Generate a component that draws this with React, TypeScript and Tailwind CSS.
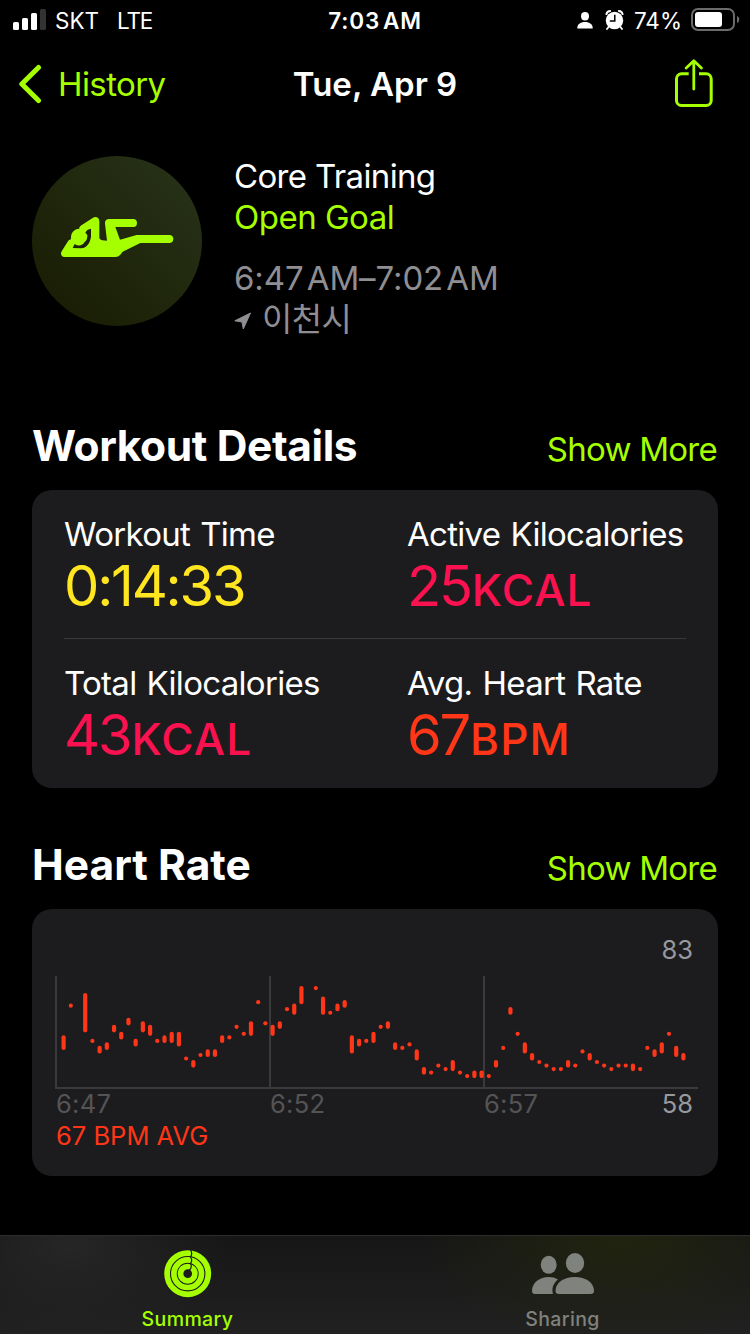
import React from "react";

// [slot, lowest bpm, highest bpm]
const heartRate: number[][] = [
  [0, 66, 69], [1, 78, 78], [3, 71, 81], [4, 68, 68], [5, 65, 66], [6, 66, 67], [7, 71, 72],
  [8, 69, 70], [9, 73, 74], [10, 67, 68], [11, 71, 73], [12, 70, 72], [13, 68, 68], [14, 68, 69],
  [15, 68, 70], [16, 67, 70], [17, 63, 63], [18, 61, 62], [19, 64, 64], [20, 64, 65], [21, 64, 65],
  [22, 68, 69], [23, 69, 69], [24, 72, 72], [25, 70, 70], [26, 70, 73], [27, 79, 79], [28, 73, 73],
  [29, 70, 72], [30, 72, 73], [31, 77, 77], [32, 76, 78], [33, 79, 83], [35, 83, 83], [36, 76, 80],
  [37, 76, 76], [38, 77, 78], [39, 78, 79], [40, 65, 69], [41, 67, 68], [42, 68, 68], [43, 68, 70],
  [44, 72, 72], [45, 72, 73], [46, 66, 67], [47, 66, 66], [48, 67, 67], [49, 63, 65], [50, 59, 60],
  [51, 59, 59], [52, 61, 61], [53, 60, 60], [54, 60, 62], [55, 59, 59], [56, 58, 58], [57, 58, 59],
  [58, 58, 59], [59, 58, 58], [60, 61, 62], [61, 66, 66], [62, 76, 77], [63, 70, 70], [64, 65, 67],
  [65, 63, 64], [66, 62, 62], [67, 61, 61], [68, 60, 60], [69, 60, 60], [70, 61, 62], [71, 61, 61],
  [72, 65, 65], [73, 63, 64], [74, 62, 62], [75, 61, 61], [76, 60, 60], [77, 61, 61], [78, 61, 61],
  [79, 60, 61], [80, 60, 60], [81, 66, 66], [82, 64, 65], [83, 65, 67], [84, 70, 70], [85, 64, 66],
  [86, 63, 64],
];

const StatusBar = () => (
  <div className="grid h-[42px] grid-cols-3 items-center text-[22.5px] leading-[42px]">
    <div className="flex items-center pl-[13px]">
      <svg className="mb-0.5" width="34" height="22" viewBox="0 0 34 22" fill="#fff">
        <rect x="0" y="13" width="6" height="8" rx="1.5" />
        <rect x="9" y="9" width="6" height="12" rx="1.5" />
        <rect x="18" y="4" width="6" height="17" rx="1.5" />
        <rect x="27" y="0" width="6" height="21" rx="1.5" fill="#333" />
      </svg>
      <span className="ml-2">SKT</span>
      <span className="ml-[18px] tracking-[-1.2px]">LTE</span>
    </div>
    <div className="text-center font-semibold tracking-[0.9px] [word-spacing:-4px]">7:03 AM</div>
    <div className="flex items-center justify-end pr-[10px]">
      <svg className="mb-px" width="16" height="17" viewBox="0 0 16 17" fill="#fff">
        <ellipse cx="8" cy="4.2" rx="4" ry="4.2" />
        <path d="M0.3 16.5C0 12.3 3.5 10 8 10s8 2.3 7.7 6.5z" />
      </svg>
      <svg className="mb-0.5 ml-3" width="19" height="20" viewBox="0 0 19 20" fill="none">
        <circle cx="9.5" cy="10.5" r="8.7" fill="#fff" />
        <path d="M1.3 4.2C1.8 2.2 3.3 1 5.2 1M17.7 4.2C17.2 2.2 15.7 1 13.8 1" stroke="#fff" strokeWidth="1.8" strokeLinecap="round" />
        <path d="M3.5 17 2 19M15.5 17l1.5 2" stroke="#fff" strokeWidth="1.8" strokeLinecap="round" />
        <path d="M9.8 4.8v6.2H4.8" stroke="#000" strokeWidth="1.5" />
      </svg>
      <span className="ml-2.5">74%</span>
      <svg className="mb-0.5 ml-[9px]" width="49" height="24" viewBox="0 0 49 24">
        <rect x="1" y="1" width="42" height="21" rx="6" fill="none" stroke="#6b6b6b" strokeWidth="2" />
        <rect x="4" y="4" width="27" height="15" rx="3" fill="#fff" />
        <path d="M46 8c3 .8 3 6.2 0 7z" fill="#6b6b6b" />
      </svg>
    </div>
  </div>
);

const NavBar = () => (
  <div className="grid h-[84px] grid-cols-3 items-center text-[33px] leading-[84px]">
    <div className="flex items-center pl-[18px] text-[#a6ff00]">
      <svg width="24" height="40" viewBox="0 0 24 40" fill="none" stroke="currentColor" strokeWidth="5" strokeLinecap="round" strokeLinejoin="round">
        <path d="M20.5 3.5 3.8 20l16.7 16.500" />
      </svg>
      <span className="ml-4 tracking-[-0.6px]">History</span>
    </div>
    <div className="text-center font-semibold whitespace-nowrap">Tue, Apr 9</div>
    <div className="flex justify-end pr-9">
      <svg width="40" height="50" viewBox="0 0 40 50" fill="none" stroke="#a6ff00" strokeWidth="3" strokeLinejoin="round">
        <path d="M14.7 14.8H7.5a5 5 0 0 0-5 5V41.5a5 5 0 0 0 5 5h24.7a5 5 0 0 0 5-5V19.8a5 5 0 0 0-5-5H25" />
        <path d="M19.8 30V1.8M12.2 9l7.6-7.2L27.4 9" strokeLinecap="round" strokeWidth="2.8" />
      </svg>
    </div>
  </div>
);

const WorkoutIcon = () => (
  <div className="flex h-[170px] w-[170px] items-center justify-center rounded-full bg-gradient-to-tr from-[#171b02] to-[#29341a]">
    <svg width="170" height="170" viewBox="36 33 510 510" fill="#a6ff00">
      {/* torso and legs */}
      <path d="M133 336Q123 335 123 325Q123 321 126 317L143 290Q146 284 153 283Q151 262 166 254Q172 251 178 251Q177 246 182 242L218 219Q224 215 231 217Q238 220 238 228V280Q240 285 247 286L261 287L255 236Q254 222 268 222H340Q351 223 351 234Q351 246 340 246H286L300 284L350 270H448Q460 271 460 282Q459 294 448 294H361L308 320L301 329Q295 336 286 336Z" />
      {/* arm around the head */}
      <path d="M203 254L213 251V275Q211 292 200 303Q192 311 182 310L158 309L164 297Q172 303 182 301Q191 298 194 291Q203 285 202 271Q201 266 196 264Q199 257 203 254Z" fill="#1c2209" />
    </svg>
  </div>
);

const SectionTitle = ({ title, tracking }: { title: string; tracking: string }) => (
  <div className="flex h-[70px] items-center justify-between">
    <h2 className={`text-[42.5px] leading-[70px] font-bold ${tracking}`}>{title}</h2>
    <span className="pt-[7px] pr-px text-[33px] tracking-[-0.75px] text-[#a6ff00]">Show More</span>
  </div>
);

const Metric = ({ label, value, unit, color }: { label: string; value: string; unit?: string; color: string }) => (
  <div className="whitespace-nowrap">
    <div className="text-[33px] leading-[44px] tracking-[-0.7px] [word-spacing:1.5px]">{label}</div>
    <div className={`text-[56px] leading-[60px] tracking-[-2.2px] ${color}`}>
      {value}
      {unit && <span className="ml-px text-[44px] font-medium tracking-[1.2px]">{unit}</span>}
    </div>
  </div>
);

const HeartRateChart = () => (
  <svg className="block overflow-visible" width="644" height="113" viewBox="0 0 644 113">
    <path d="M0 0v112M214 0v112M428 0v112M-1 112h643" stroke="#3a3a3c" strokeWidth="2" fill="none" />
    {heartRate.map(([slot, low, high]) => (
      <rect
        key={slot}
        x={5.5 + slot * 7.207}
        y={98 - (high - 58) * 3.52}
        width="4.2"
        height={4.2 + (high - low) * 3.52}
        rx="2.1"
        fill="#ff3617"
      />
    ))}
  </svg>
);

const TabBar = () => (
  <nav className="grid h-[99px] grid-cols-2 border-t border-[#2c2c2c] bg-[radial-gradient(ellipse_160px_90px_at_70px_10px,#262626,transparent),radial-gradient(ellipse_200px_110px_at_620px_0px,#21240f,transparent),linear-gradient(#161616,#212121)] text-[19.5px] font-medium tracking-[0.4px]">
    <div className="flex flex-col items-center pt-[14px] text-[#a6ff00]">
      <svg width="48" height="48" viewBox="0 0 48 48" fill="none" stroke="currentColor" strokeWidth="5.7">
        <circle cx="23.7" cy="23.7" r="20.6" />
        <circle cx="23.7" cy="23.7" r="13.8" />
        <circle cx="23.7" cy="23.7" r="7.2" />
        <path d="M26.5 0q2.4 3.5 0 7 2.4 3.3 0 6.6 2.2 3.4-1.5 6.9" stroke="#181a14" strokeWidth="1.2" />
      </svg>
      <span className="mt-[6px] leading-[30px]">Summary</span>
    </div>
    <div className="flex flex-col items-center pt-[14px] text-[#80827d]">
      <svg width="64" height="48" viewBox="0 0 64 48" fill="currentColor">
        <ellipse cx="17.7" cy="14.8" rx="8" ry="9" />
        <ellipse cx="44" cy="13" rx="9.2" ry="10" />
        <path d="M4 44q-3 0-3-3C1 32.5 9 27 17.5 27c3.5 0 7 .8 9.500 2.500-5 4-6.500 9-5 14.500z" />
        <path d="M28 44q-3.5 0-3.5-3C24.5 32.5 33 27 43.8 27S63 32.5 63 41q0 3-3.5 3z" />
      </svg>
      <span className="mt-[6px] leading-[30px]">Sharing</span>
    </div>
  </nav>
);

export default function App() {
  return (
    <div className="flex h-[1334px] w-[750px] flex-col overflow-hidden bg-black font-['Inter','Noto_Sans_CJK_KR',sans-serif] text-white">
      <StatusBar />
      <NavBar />

      <main className="flex-1 px-8 pt-[30px]">
        <section className="flex h-[255px]">
          <WorkoutIcon />
          <div className="ml-8 text-[33px] leading-[41px] tracking-[-0.65px]">
            <div>Core Training</div>
            <div className="tracking-[-0.5px] text-[#a6ff00]">Open Goal</div>
            <div className="mt-5 tracking-[-0.1px] text-[#8e8e93] [word-spacing:-6px]">6:47 AM–7:02 AM</div>
            <div className="flex items-center text-[#8e8e93]">
              <svg className="mt-0.5" width="18" height="18" viewBox="0 0 18 18" fill="currentColor" stroke="currentColor" strokeLinejoin="round">
                <path d="M16.5 1 9.3 17 8 10 .8 8.8z" />
              </svg>
              <span className="ml-2.5">이천시</span>
            </div>
          </div>
        </section>

        <SectionTitle title="Workout Details" tracking="tracking-[-0.4px]" />
        <section className="mt-[9px] h-[298px] rounded-[20px] bg-[#1c1c1e] px-8">
          <div className="grid h-[149px] grid-cols-[343px_1fr] border-b border-[#3a3a3c] pt-[22px]">
            <Metric label="Workout Time" value="0:14:33" color="text-[#ffe620]" />
            <Metric label="Active Kilocalories" value="25" unit="KCAL" color="text-[#fa114f]" />
          </div>
          <div className="grid h-[149px] grid-cols-[343px_1fr] pt-[22px]">
            <Metric label="Total Kilocalories" value="43" unit="KCAL" color="text-[#fa114f]" />
            <Metric label="Avg. Heart Rate" value="67" unit="BPM" color="text-[#ff3617]" />
          </div>
        </section>

        <div className="mt-[42px]">
          <SectionTitle title="Heart Rate" tracking="tracking-normal" />
        </div>
        <section className="mt-[9px] h-[267px] rounded-[20px] bg-[#1c1c1e] pt-[25px] pl-6 text-[25.5px] leading-8">
          <div className="pr-[25px] text-right text-[#98989f]">83</div>
          <div className="mt-[10px]">
            <HeartRateChart />
          </div>
          <div className="-mt-px flex text-[#545456]">
            <span className="w-[214px] tracking-[0.3px]">6:47</span>
            <span className="w-[214px] tracking-[0.3px]">6:52</span>
            <span className="flex-1 tracking-[0.3px]">6:57</span>
            <span className="pr-[25px] text-[#98989f]">58</span>
          </div>
          <div className="text-[#ff3617]">67 BPM AVG</div>
        </section>
      </main>

      <TabBar />
    </div>
  );
}
